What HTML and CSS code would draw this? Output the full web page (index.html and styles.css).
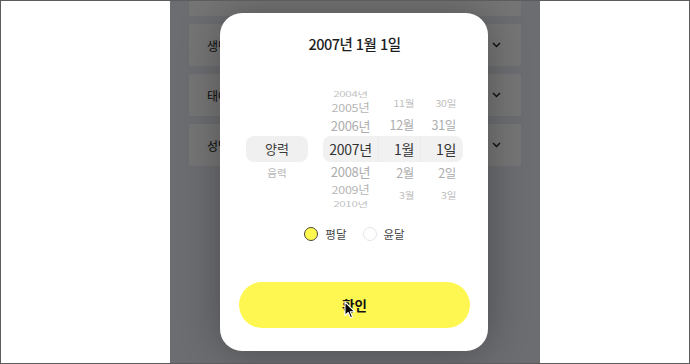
FILE: index.html
```html
<!DOCTYPE html>
<html lang="ko">
<head>
<meta charset="utf-8">
<link rel="stylesheet" href="styles.css">
</head>
<body>
<div class="frame">
  <div class="side side-left"></div>
  <div class="phone">
    <div class="page">
      <div class="card"></div>
      <div class="card"><span class="label">생년월일</span><svg class="chev" width="9" height="6" viewBox="0 0 9 6"><path d="M1 1l3.5 3.5L8 1" fill="none" stroke="#222" stroke-width="1.4"/></svg></div>
      <div class="card"><span class="label">태어난 시간</span><svg class="chev" width="9" height="6" viewBox="0 0 9 6"><path d="M1 1l3.5 3.5L8 1" fill="none" stroke="#222" stroke-width="1.4"/></svg></div>
      <div class="card"><span class="label">성별</span><svg class="chev" width="9" height="6" viewBox="0 0 9 6"><path d="M1 1l3.5 3.5L8 1" fill="none" stroke="#222" stroke-width="1.4"/></svg></div>
    </div>
    <div class="dim"></div>
    <div class="modal">
      <div class="title">2007년 1월 1일</div>
      <div class="picker">
        <div class="cal-col">
          <div class="cal sel-cal">양력</div>
          <div class="cal">음력</div>
        </div>
        <div class="wheel">
          <div class="col col-year">
            <div class="it y3">2004년</div>
            <div class="it y2">2005년</div>
            <div class="it y1">2006년</div>
            <div class="it sel sel-first">2007년</div>
            <div class="it y1">2008년</div>
            <div class="it y2">2009년</div>
            <div class="it y3">2010년</div>
          </div>
          <div class="col col-month">
            <div class="it m2">11월</div>
            <div class="it m1">12월</div>
            <div class="it sel">1월</div>
            <div class="it m1">2월</div>
            <div class="it m2">3월</div>
          </div>
          <div class="col col-day">
            <div class="it m2">30일</div>
            <div class="it m1">31일</div>
            <div class="it sel sel-last">1일</div>
            <div class="it m1">2일</div>
            <div class="it m2">3일</div>
          </div>
        </div>
      </div>
      <div class="radios">
        <div class="radio"><span class="dot dot-on"></span><span>평달</span></div>
        <div class="radio"><span class="dot"></span><span>윤달</span></div>
      </div>
      <button class="confirm">확인</button>
    </div>
    <svg class="cursor" width="12" height="18" viewBox="0 0 12 18"><path d="M1 1v13.5l3.2-3 2.3 5.2 2-0.9-2.2-5.1h4.4z" fill="#000" stroke="#fff" stroke-width="1.1" stroke-linejoin="round"/></svg>
  </div>
  <div class="side side-right"></div>
</div>
</body>
</html>
```

FILE: styles.css
```css
* { box-sizing: border-box; }
html, body { margin: 0; padding: 0; background: #fff; }
body { font-family: "Noto Sans CJK KR", "Noto Sans", sans-serif; }

.frame {
  width: 690px;
  height: 364px;
  border: 1px solid #5c5c5c;
  display: flex;
  overflow: hidden;
}
.side-left { width: 169px; background: #fff; }
.side-right { flex: 1; background: #fff; }

.phone {
  width: 370px;
  height: 362px;
  position: relative;
  overflow: hidden;
  background: #eceef5;
}

.page {
  padding: 0 19px;
  margin-top: -27px;
  display: flex;
  flex-direction: column;
  gap: 8px;
}
.card {
  height: 42px;
  background: #fff;
  border-radius: 2px;
  display: flex;
  align-items: center;
  justify-content: space-between;
  padding: 0 20px 0 18px;
}
.label { font-size: 12px; color: #222; letter-spacing: -0.3px; }

.dim {
  position: absolute;
  inset: 0;
  background: rgba(0, 0, 0, 0.54);
}

.modal {
  position: absolute;
  top: 12px;
  left: 50px;
  width: 268px;
  height: 338px;
  background: #fff;
  border-radius: 22px;
  box-shadow: 0 0 40px rgba(0, 0, 0, 0.3);
  padding: 21px 18px 23px 19px;
  display: flex;
  flex-direction: column;
}

.title {
  height: 20px;
  line-height: 20px;
  text-align: center;
  font-size: 14.5px;
  font-weight: 500;
  color: #1e1e1e;
  letter-spacing: -0.5px;
}

.picker {
  margin-top: 34px;
  height: 122px;
  display: flex;
  justify-content: center;
  gap: 15px;
}
.cal-col {
  width: 62px;
  padding-top: 48px;
  display: flex;
  flex-direction: column;
}
.cal {
  height: 20px;
  line-height: 20px;
  text-align: center;
  font-size: 10.5px;
  color: #b8b8b8;
  margin-top: 1px;
}
.cal.sel-cal {
  height: 26px;
  line-height: 26px;
  margin-top: 0;
  background: #f0f0f0;
  border-radius: 8px;
  font-size: 13px;
  color: #3a3a3a;
}

.wheel { width: 140px; display: flex; }
.col { display: flex; flex-direction: column; }
.col-year { width: 55px; text-align: center; }
.col-month { width: 42px; text-align: right; padding-top: 4px; }
.col-day { width: 43px; text-align: right; padding-top: 4px; }
.col-month .it { padding-right: 6px; }
.col-day .it { padding-right: 7px; }

.it { white-space: nowrap; letter-spacing: -0.3px; }
.y3 { height: 12px; line-height: 12px; font-size: 11.5px; color: #c2c2c2; transform: scaleY(0.62); }
.y2 { height: 16px; line-height: 16px; font-size: 12.5px; color: #b6b6b6; transform: scaleY(0.88); }
.y1 { height: 20px; line-height: 20px; font-size: 13px; color: #adadad; }
.m1 { height: 22px; line-height: 22px; font-size: 12.5px; color: #adadad; }
.m2 { height: 22px; line-height: 22px; font-size: 10.5px; color: #bdbdbd; transform: scaleY(0.9); }
.sel {
  height: 26px;
  line-height: 26px;
  font-size: 14px;
  color: #333;
  background: #f1f1f1;
  border-left: 1px solid #ebebeb;
}
.sel-first { border-left: none; border-radius: 8px 0 0 8px; }
.sel-last { border-radius: 0 8px 8px 0; }

.radios {
  margin-top: 16px;
  height: 16px;
  display: flex;
  justify-content: center;
  gap: 16px;
}
.radio {
  display: flex;
  align-items: center;
  gap: 7px;
  font-size: 11.5px;
  color: #444;
}
.dot {
  width: 14px;
  height: 14px;
  border-radius: 50%;
  border: 1px solid #e4e4ea;
  background: #fff;
}
.dot-on { background: #fff84f; border-color: #4a4a3a; }

.confirm {
  margin-top: 40px;
  height: 46px;
  border: none;
  border-radius: 23px;
  background: #fff751;
  font-family: inherit;
  font-size: 13.5px;
  font-weight: 700;
  color: #111;
  padding: 0;
}

.cursor {
  position: absolute;
  left: 174px;
  top: 300px;
}
```
